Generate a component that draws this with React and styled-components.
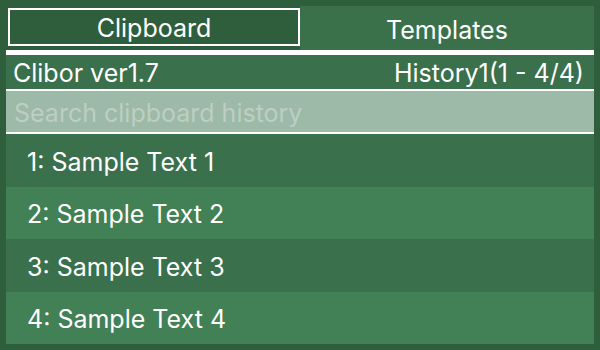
import React from 'react';
import styled, { createGlobalStyle } from 'styled-components';

const Global = createGlobalStyle`
  html, body {
    margin: 0;
    background: #2f5e3c;
  }
  body {
    font-family: Inter, "Liberation Sans", Arial, sans-serif;
    color: #fff;
  }
`;

const Frame = styled.div`
  width: 588px;
  height: 338px;
  margin: 6px;
  display: flex;
  flex-direction: column;
  background: #3a704b;
`;

const Tabs = styled.div`
  display: grid;
  grid-template-columns: 1fr 1fr;
  height: 44px;
  border-bottom: 5px solid #fff;
`;

const Tab = styled.div`
  display: flex;
  padding: ${p => (p.$active ? '2px 0 4px 2px' : '0')};
  background: ${p => (p.$active ? '#2f5e3c' : '#3a714b')};
`;

const TabLabel = styled.div`
  flex: 1;
  display: flex;
  align-items: center;
  justify-content: center;
  padding-top: ${p => (p.$active ? '2px' : '3px')};
  font-size: 25px;
  border: ${p => (p.$active ? '2px solid #fff' : 'none')};
`;

const InfoBar = styled.div`
  height: 36px;
  display: flex;
  align-items: center;
  justify-content: space-between;
  padding: 2px 10px 0 7px;
  box-sizing: border-box;
  font-size: 25px;
  background: #3a704b;
  border-bottom: 2px solid #fff;
`;

const Search = styled.input`
  height: 39px;
  border: none;
  border-bottom: 2px solid #fff;
  margin: 0;
  padding: 2px 8px 0;
  background: #9db9a8;
  font-family: inherit;
  font-size: 25px;
  color: #fff;
  outline: none;
  &::placeholder {
    color: #bccfc2;
  }
`;

const List = styled.div`
  flex: 1;
  display: grid;
  grid-template-rows: repeat(4, 1fr);
`;

const Row = styled.div`
  display: flex;
  align-items: center;
  padding: 3px 0 0 21px;
  font-size: 25px;
  background: ${p => (p.$odd ? '#3a704b' : '#428055')};
`;

const items = ['Sample Text 1', 'Sample Text 2', 'Sample Text 3', 'Sample Text 4'];

export default function App() {
  return (
    <>
      <Global />
      <Frame>
        <Tabs>
          <Tab $active>
            <TabLabel $active>Clipboard</TabLabel>
          </Tab>
          <Tab>
            <TabLabel>Templates</TabLabel>
          </Tab>
        </Tabs>
        <InfoBar>
          <span>Clibor ver1.7</span>
          <span>History1(1 - 4/4)</span>
        </InfoBar>
        <Search placeholder="Search clipboard history" />
        <List>
          {items.map((t, i) => (
            <Row key={t} $odd={i % 2 === 0}>
              {i + 1}: {t}
            </Row>
          ))}
        </List>
      </Frame>
    </>
  );
}
